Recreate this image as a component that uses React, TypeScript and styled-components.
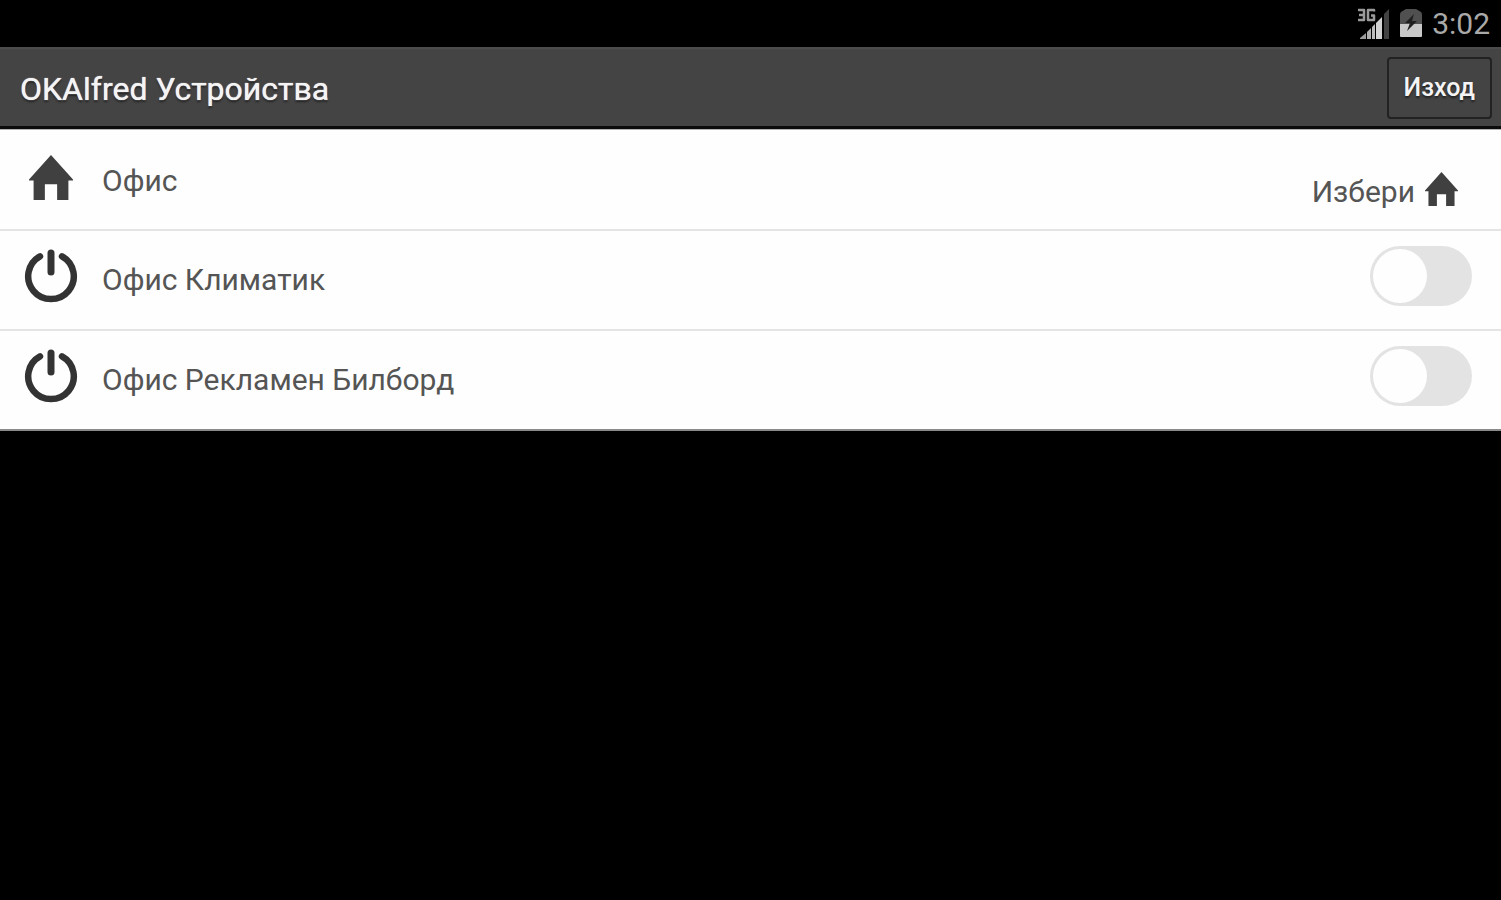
import React, { useState } from "react";
import styled, { createGlobalStyle } from "styled-components";

const GlobalStyle = createGlobalStyle`
  *, *::before, *::after { box-sizing: border-box; }
  body {
    margin: 0;
    background: #000;
    font-family: Roboto, "Noto Sans", sans-serif;
  }
`;

const StatusBar = styled.div`
  display: flex;
  align-items: center;
  justify-content: flex-end;
  height: 47px;
  padding: 0 11px;
  color: #a9a9a9;
`;

const Clock = styled.time`
  margin-left: 10px;
  font-size: 30px;
  line-height: 46px;
`;

const BatterySlot = styled.span`
  display: flex;
  margin: 0 0 2px 10px;
`;

const AppBar = styled.header`
  display: flex;
  align-items: center;
  justify-content: space-between;
  height: 82px;
  padding: 2px 9px 0 20px;
  background: #444;
  border-top: 2px solid #4c4c4c;
  border-bottom: 3px solid #0c0c0c;
`;

const Title = styled.h1`
  margin: 0;
  color: #f4f4f4;
  font-size: 32px;
  font-weight: 400;
  line-height: 36px;
  text-shadow: 0 0 1px #fff, 0 2px 2px #222;
`;

const ExitButton = styled.button`
  height: 62px;
  margin-bottom: 2px;
  padding: 0 15px;
  color: #f4f4f4;
  background: #444;
  border: 2px solid #222;
  border-radius: 4px;
  font: 500 25px/30px Roboto, "Noto Sans", sans-serif;
  text-shadow: 0 2px 2px #222;
`;

const DeviceList = styled.ul`
  margin: 0;
  padding: 1px 0 0;
  list-style: none;
  background: #fefefe;
  border-top: 1px solid #b4b4b4;
`;

const Row = styled.li`
  display: flex;
  align-items: center;
  height: 100px;
  padding: 0 29px 0 24px;
  border-bottom: 2px solid #e4e4e4;

  &:first-child { padding-top: 2px; }
  &:last-child { border-bottom-color: #8a8a8a; }
`;

const IconSlot = styled.span`
  display: flex;
  justify-content: center;
  width: 54px;
  margin-right: 24px;
  padding-bottom: 8px;
`;

const Name = styled.label`
  flex: 1;
  color: #555;
  font-size: 30px;
  line-height: 36px;
`;

const PickLink = styled.a`
  display: flex;
  align-items: center;
  gap: 10px;
  padding: 21px 14px 0 0;
  color: #555;
  font-size: 30px;
  line-height: 36px;
  text-decoration: none;

  svg { margin-bottom: 6px; }
`;

const Switch = styled.input`
  appearance: none;
  display: flex;
  align-items: center;
  width: 102px;
  height: 60px;
  margin: 0 0 8px;
  padding: 0 3px;
  background: #e3e3e3;
  border-radius: 30px;

  &::before {
    content: "";
    width: 54px;
    height: 54px;
    background: #fefefe;
    border-radius: 50%;
  }

  &:checked { justify-content: flex-end; background: #4cd964; }
`;

const SignalIcon = () => (
  <svg width="33" height="32" viewBox="0 0 33 32" aria-hidden="true">
    <g fill="none" stroke="#9a9a9a" strokeWidth="2.500" strokeLinejoin="round">
      <path d="M1 2H7V12H1M2 7H7" />
      <path d="M17 3.500V2H11V12H17V7.500H14" />
    </g>
    <path d="M3 31V30L9 25V31Z" fill="#9c9c9c" />
    <path d="M10 31V24L14 20V31Z" fill="#b0b0b0" />
    <path d="M15 31V19L18 16V31Z" fill="#bcbcbc" />
    <path d="M19 31V15L25 9V31Z" fill="#d2d2d2" />
    <path d="M27 31V6L32 1V31Z" fill="#424242" />
  </svg>
);

const BatteryIcon = () => (
  <svg width="22" height="30" viewBox="0 0 22 30" aria-hidden="true">
    <path d="M6 1H16L21 4Q22 5 22 7V16H0V7Q0 5 1 4Z" fill="#505050" />
    <path d="M0 16H22V28Q22 29 21 29H1Q0 29 0 28Z" fill="#c9c9c9" />
    <path d="M14 6L5 15H10L7 23L17 13H12Z" fill="#202020" />
  </svg>
);

const HomeIcon = ({ size }: { size: number }) => (
  <svg width={size} height={size + 1} viewBox="0 0 43 46" preserveAspectRatio="none" aria-hidden="true">
    <path d="M21.500 0L43 25V26H38.500V46H27.500V30H15.500V46H4.500V26H0V25Z" fill="#404040" />
  </svg>
);

const PowerIcon = () => (
  <svg width="54" height="54" viewBox="0 0 54 54" fill="none" stroke="#333" strokeLinecap="round" aria-hidden="true">
    <path d="M16 7.300A22.800 22.800 0 1 0 38 7.300" strokeWidth="6.500" />
    <path d="M27 4V23" strokeWidth="7" />
  </svg>
);

const devices = [
  { id: "climate", name: "Офис Климатик" },
  { id: "billboard", name: "Офис Рекламен Билборд" },
];

export default function App() {
  const [active, setActive] = useState<Record<string, boolean>>({});

  return (
    <>
      <GlobalStyle />
      <StatusBar>
        <SignalIcon />
        <BatterySlot><BatteryIcon /></BatterySlot>
        <Clock>3:02</Clock>
      </StatusBar>
      <AppBar>
        <Title>OKAlfred Устройства</Title>
        <ExitButton type="button">Изход</ExitButton>
      </AppBar>
      <main>
        <DeviceList>
          <Row>
            <IconSlot><HomeIcon size={44} /></IconSlot>
            <Name as="span">Офис</Name>
            <PickLink href="#places">
              Избери
              <HomeIcon size={33} />
            </PickLink>
          </Row>
          {devices.map(({ id, name }) => (
            <Row key={id}>
              <IconSlot><PowerIcon /></IconSlot>
              <Name htmlFor={id}>{name}</Name>
              <Switch
                id={id}
                type="checkbox"
                checked={!!active[id]}
                onChange={(e) => setActive({ ...active, [id]: e.target.checked })}
              />
            </Row>
          ))}
        </DeviceList>
      </main>
    </>
  );
}
